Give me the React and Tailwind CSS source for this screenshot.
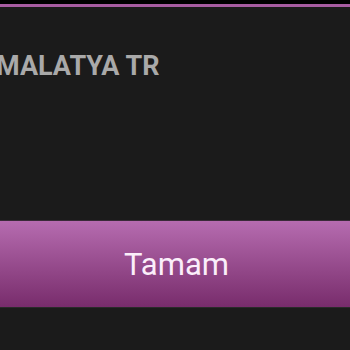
export default function App() {
  return (
    <div className="w-[350px] h-[350px] bg-[#1b1b1b] overflow-hidden flex flex-col" style={{ fontFamily: "Roboto, 'Liberation Sans', sans-serif" }}>
      <div className="h-[4px] bg-black" />
      <div className="h-[3px] bg-[#a75ca1]" />
      <div className="h-[213px] relative">
        <div className="absolute left-[-4px] top-[46px] text-[27px] font-bold text-[#a9a9a9] leading-none whitespace-nowrap">
          MALATYA TR
        </div>
      </div>
      <div className="h-px bg-[#3a2a38]" />
      <button className="h-[86px] w-full bg-gradient-to-b from-[#b66cb0] to-[#782c6c] text-[#fbeefa] text-[31px] flex items-center justify-center pl-[3px] pt-[3px]">
        Tamam
      </button>
      <div className="h-px bg-[#2a2a2a]" />
    </div>
  );
}
